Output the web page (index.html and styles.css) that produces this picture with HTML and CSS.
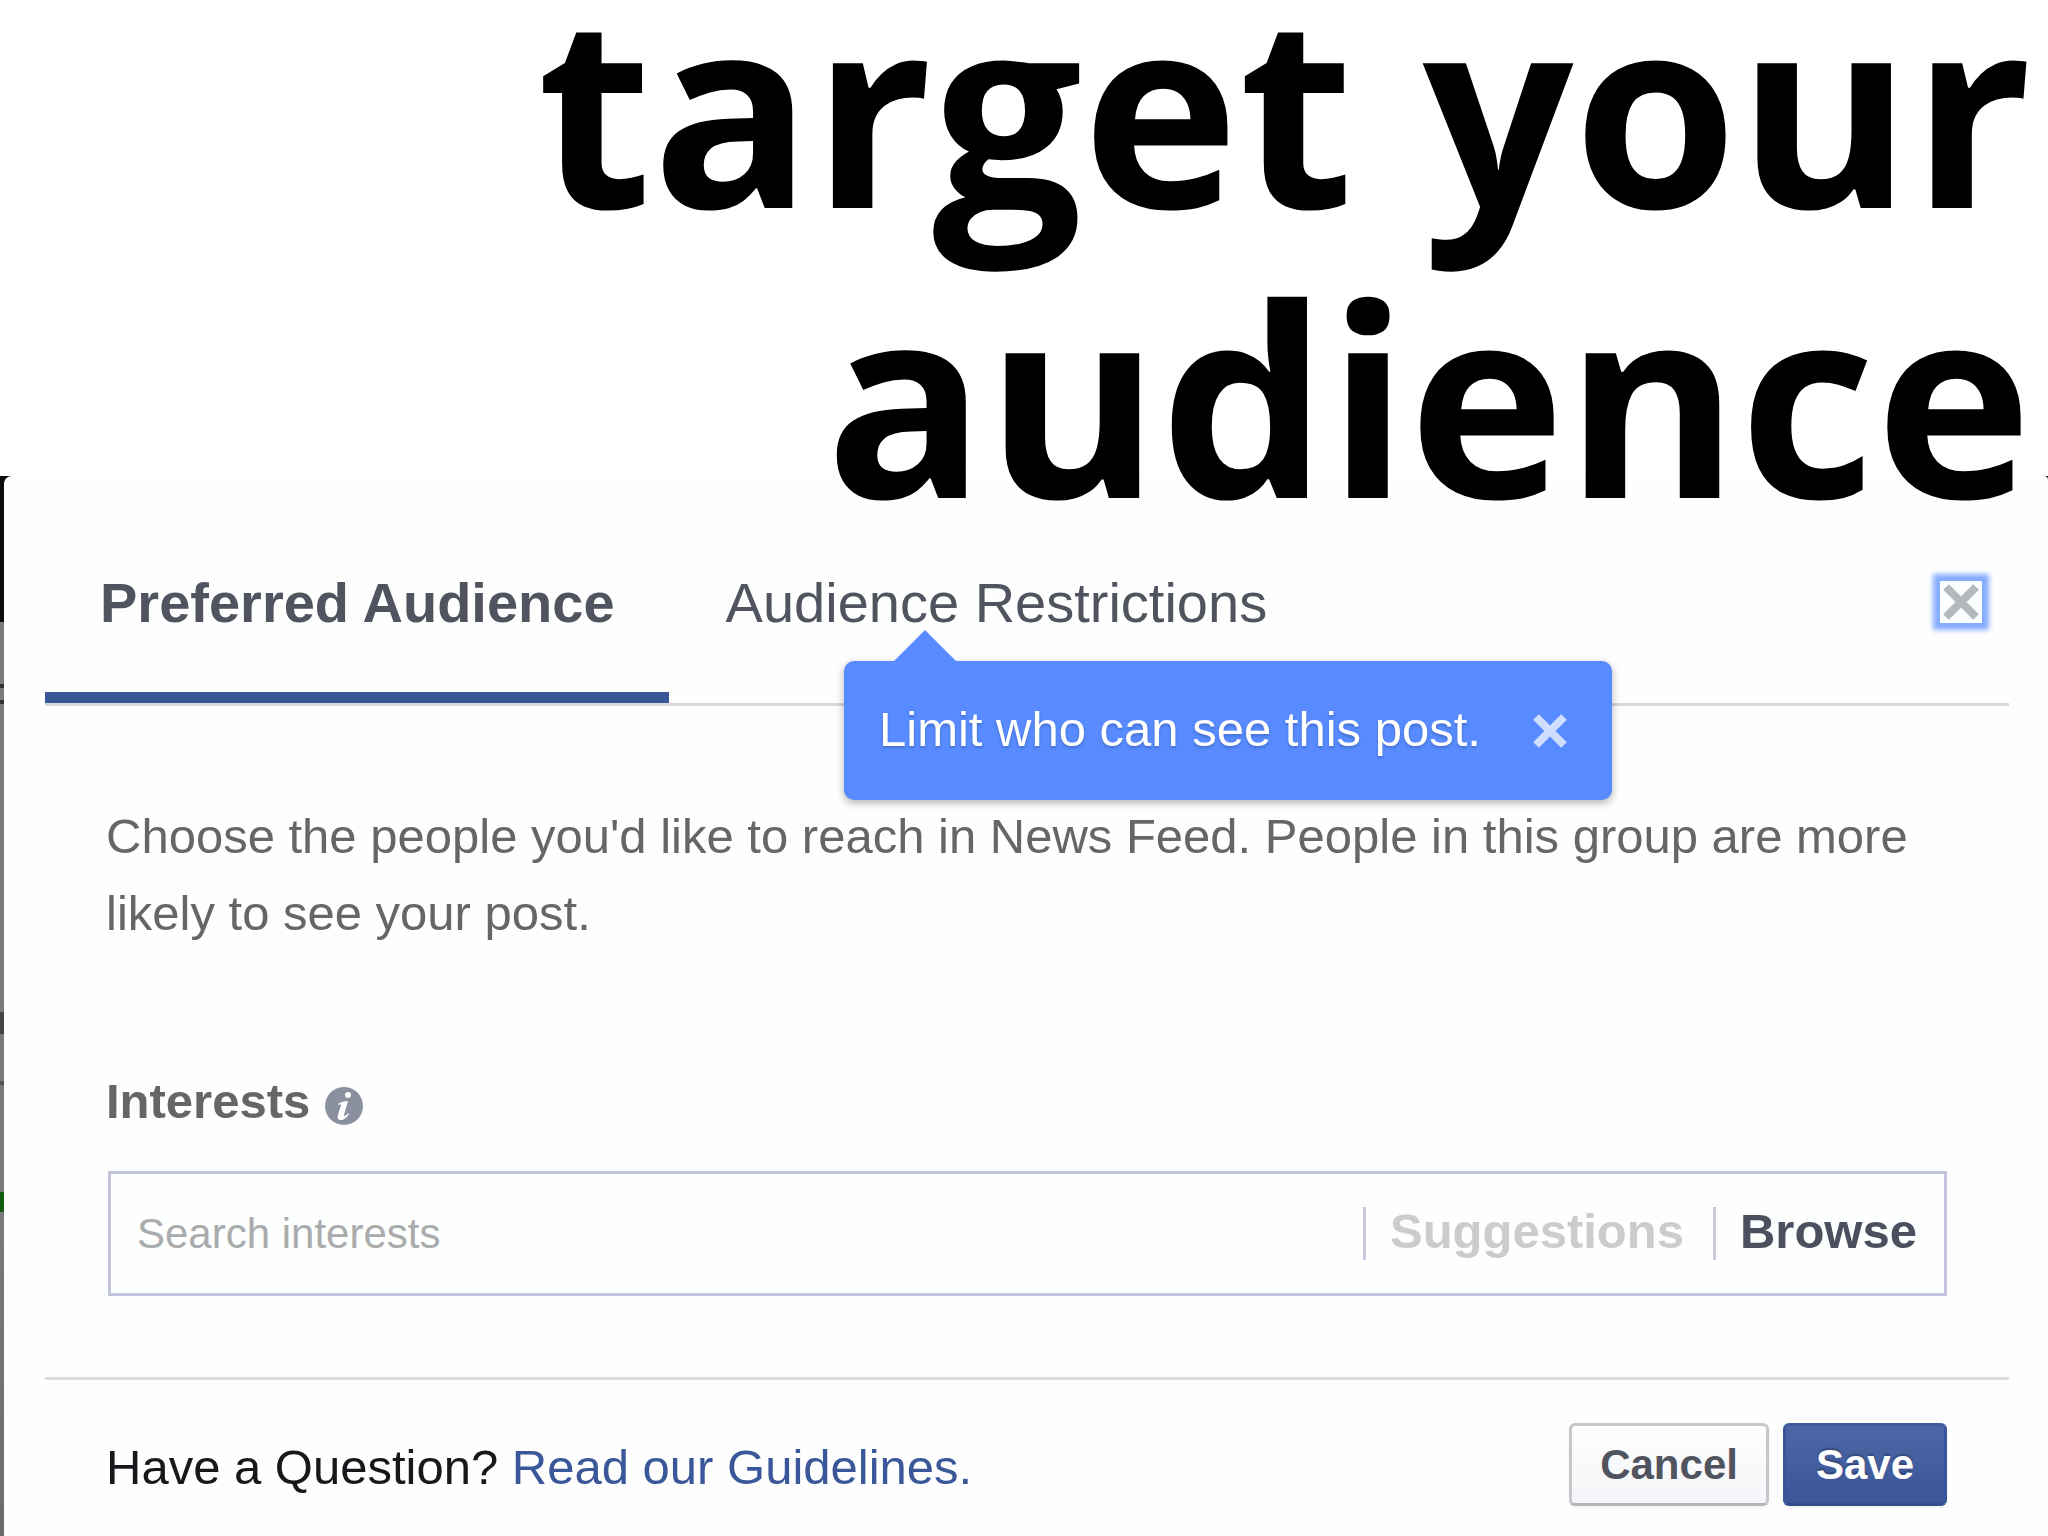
FILE: index.html
```html
<!DOCTYPE html>
<html lang="en">
<head>
    <meta charset="UTF-8">
    <title>Target your audience</title>
    <link rel="stylesheet" href="styles.css">
</head>
<body>
    <h1 class="headline">target your<br>audience</h1>

    <div class="backdrop">
        <main class="dialog">
            <header class="tabs">
                <button class="tab active" type="button">Preferred Audience</button>
                <button class="tab" type="button">Audience Restrictions</button>
                <button class="close-button" type="button" aria-label="Close">
                    <svg viewBox="0 0 42 42"><path d="M6 6L36 36M36 6L6 36" stroke="#b4b9bc" stroke-width="8"/></svg>
                </button>
                <div class="tooltip" role="tooltip">
                    <span>Limit who can see this post.</span>
                    <button class="tooltip-close" type="button" aria-label="Dismiss">
                        <svg viewBox="0 0 34 34"><path d="M3 3L31 31M31 3L3 31" stroke="#cfdeff" stroke-width="8"/></svg>
                    </button>
                </div>
            </header>

            <section class="content">
                <p class="intro">Choose the people you'd like to reach in News Feed. People in this group are more likely to see your post.</p>

                <div class="field-label">
                    <label for="interests">Interests</label>
                    <svg class="info" viewBox="0 0 38 38">
                        <circle cx="19" cy="19" r="19" fill="#8b90a0"/>
                        <circle cx="23" cy="8" r="3" fill="#fff"/>
                        <path d="M13 17c3-2 6-3 10-3l-4 14c0 2 2 1 4-2l1 1c-3 4-5 6-8 6s-4-2-3-5l3-10c0-1-1-1-3 0z" fill="#fff"/>
                    </svg>
                </div>

                <div class="search">
                    <input id="interests" type="text" placeholder="Search interests">
                    <button class="suggestions" type="button">Suggestions</button>
                    <button class="browse" type="button">Browse</button>
                </div>
            </section>

            <footer class="footer">
                <p class="help">Have a Question? <a href="#">Read our Guidelines.</a></p>
                <div class="actions">
                    <button class="cancel" type="button">Cancel</button>
                    <button class="save" type="button">Save</button>
                </div>
            </footer>
        </main>
    </div>
</body>
</html>
```
FILE: styles.css
```css
* {
    box-sizing: border-box;
}

body {
    margin: 0;
    min-height: 100vh;
    display: flex;
    flex-direction: column;
    background-color: #fff;
    font-family: "Liberation Sans", Arial, sans-serif;
    font-size: 49px;
    overflow-x: hidden;
}

p {
    margin: 0;
}

button {
    border: none;
    background: none;
    padding: 0;
    font-family: inherit;
    cursor: pointer;
}

svg {
    display: block;
    fill: none;
}

/* Headline overlaps the top of the dialog */
.headline {
    position: relative;
    z-index: 1;
    margin: -39px 16px -65px;
    color: #000;
    font-family: "Open Sans", sans-serif;
    font-size: 265px;
    font-weight: 700;
    line-height: 290px;
    text-align: right;
}

/* Dimmed page behind the dialog */
.backdrop {
    flex: 1;
    display: flex;
    padding-left: 4px;
    background: linear-gradient(#0c0c0c 146px, #7a7a7a 146px, #7a7a7a 208px,
        #333 208px, #333 212px, #7a7a7a 212px, #7a7a7a 224px,
        #333 224px, #333 228px, #7a7a7a 228px, #7a7a7a 536px,
        #444 536px, #444 558px, #7a7a7a 558px, #7a7a7a 605px,
        #555 605px, #555 609px, #7a7a7a 609px, #7a7a7a 716px,
        #145c14 716px, #145c14 736px, #7a7a7a 736px, #6c6c6e);
}

.dialog {
    flex: 1;
    padding: 0 39px 0 41px;
    background-color: #fefefe;
    border-radius: 8px 4px 0 0;
}

.tabs {
    position: relative;
    display: flex;
    align-items: flex-start;
    gap: 2px;
    padding-top: 95px;
    border-bottom: 3px solid #d8d7dc;
}

.tab {
    padding: 0 54px 57px 55px;
    border-bottom: 11px solid transparent;
    color: #50545f;
    font-size: 56px;
    line-height: 64px;
}

.tab.active {
    border-bottom-color: #3a5795;
    font-weight: bold;
}

.close-button {
    width: 42px;
    height: 42px;
    margin: 10px 27px 0 auto;
    background-color: #fbfdff;
    box-shadow: 0 0 5px 7px #85acff;
}

.tooltip {
    position: absolute;
    top: 185px;
    left: 799px;
    display: flex;
    align-items: center;
    gap: 52px;
    height: 139px;
    padding: 0 45px 4px 35px;
    border-radius: 10px;
    background-color: #578bff;
    box-shadow: 0 3px 8px rgba(0, 0, 0, 0.3);
    color: #fff;
    text-shadow: 0 2px 3px rgba(0, 0, 0, 0.2);
    white-space: nowrap;
}

.tooltip::before {
    content: "";
    position: absolute;
    bottom: 100%;
    left: 50px;
    border: 31px solid transparent;
    border-top: none;
    border-bottom-color: #578bff;
}

.tooltip-close {
    width: 34px;
    height: 34px;
    margin-top: 4px;
}

.content {
    padding: 92px 62px 81px 61px;
    border-bottom: 3px solid #dcdcdf;
    color: #666;
}

.intro {
    line-height: 77px;
}

.field-label {
    display: flex;
    align-items: center;
    gap: 15px;
    margin: 121px 0 42px;
    font-weight: bold;
    line-height: 56px;
}

.info {
    width: 38px;
    height: 38px;
    margin-top: 10px;
}

.search {
    display: flex;
    align-items: center;
    height: 125px;
    margin-left: 2px;
    border: 3px solid #c3c5dc;
    background-color: #fdfefe;
}

.search input {
    flex: 1;
    min-width: 0;
    padding: 0 0 0 26px;
    border: none;
    outline: none;
    background: none;
    color: #50545f;
    font-family: inherit;
    font-size: 42px;
}

.search input::placeholder {
    color: #a9abac;
}

.search button {
    border-left: 3px solid #c9c8dd;
    font-size: 49px;
    font-weight: bold;
    line-height: 48px;
}

.search .suggestions {
    padding: 0 29px 5px 24px;
    color: #cbccce;
}

.search .browse {
    padding: 0 27px 5px 24px;
    color: #4b4f5e;
}

.footer {
    display: flex;
    align-items: flex-end;
    justify-content: space-between;
    padding: 43px 62px 30px 61px;
}

.help {
    color: #17171c;
    line-height: 77px;
}

.help a {
    color: #3a5899;
    text-decoration: none;
}

.actions {
    display: flex;
    gap: 14px;
}

.actions button {
    height: 83px;
    padding: 0 28px;
    border: 3px solid #c6c7ca;
    border-bottom-color: #b4b5b8;
    border-radius: 6px;
    background: linear-gradient(#fefefe, #f4f5f8);
    box-shadow: 0 2px 3px rgba(0, 0, 0, 0.06);
    color: #50545f;
    font-size: 42px;
    font-weight: bold;
}

.actions .save {
    padding: 0 30px;
    border-color: #3e5b9b #38549a #34508c;
    background: linear-gradient(#4d67a5, #3a5598);
    color: #fff;
    text-shadow: 0 -2px 2px rgba(0, 0, 0, 0.25);
}
```
